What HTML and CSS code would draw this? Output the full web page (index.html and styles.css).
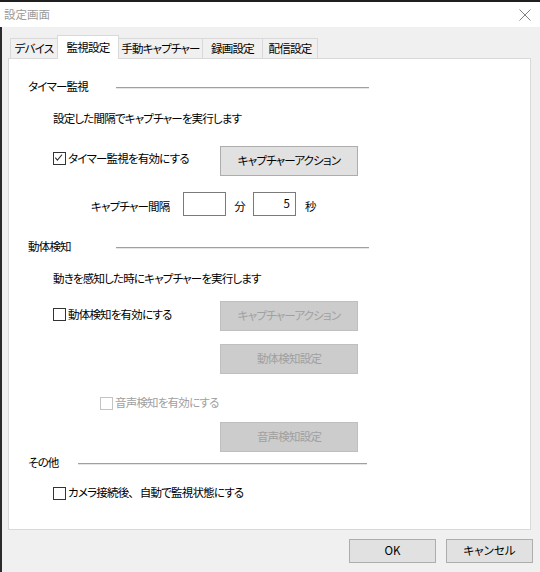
FILE: index.html
```html
<!DOCTYPE html>
<html lang="ja">
<head>
<meta charset="utf-8">
<title>設定画面</title>
<link rel="stylesheet" href="styles.css">
</head>
<body>
<div class="win">
  <div class="titlebar">
    <span class="title">設定画面</span>
    <svg class="close" viewBox="0 0 12 12" width="12" height="12"><path d="M0.5 0.5 L11.5 11.5 M11.5 0.5 L0.5 11.5" stroke="#808080" stroke-width="1" fill="none"/></svg>
  </div>
  <div class="main">
    <div class="tabs">
      <div class="tab t1">デバイス</div>
      <div class="tab active t2">監視設定</div>
      <div class="tab t3">手動キャプチャー</div>
      <div class="tab t4">録画設定</div>
      <div class="tab t5">配信設定</div>
    </div>
    <div class="panel">
      <div class="hdr m18"><span class="hdr-label w88">タイマー監視</span><i class="rule rw253"></i></div>
      <div class="desc m11">設定した間隔でキャプチャーを実行します</div>
      <div class="row row30 m18">
        <label class="check-col"><span class="cb"><svg viewBox="0 0 13 13" width="11" height="11"><polyline points="1.5,5.5 4,8.5 9.5,2" fill="none" stroke="#333" stroke-width="1.2"/></svg></span><span class="cb-text">タイマー監視を有効にする</span></label>
        <span class="btn">キャプチャーアクション</span>
      </div>
      <div class="row interval m16">
        <span class="iv-label">キャプチャー間隔</span>
        <span class="field"></span>
        <span class="unit">分</span>
        <span class="field">5</span>
        <span class="unit2">秒</span>
      </div>
      <div class="hdr m21"><span class="hdr-label w88">動体検知</span><i class="rule rw253"></i></div>
      <div class="desc m11">動きを感知した時にキャプチャーを実行します</div>
      <div class="row row30 m13">
        <label class="check-col off7"><span class="cb"></span><span class="cb-text">動体検知を有効にする</span></label>
        <span class="btn disabled">キャプチャーアクション</span>
      </div>
      <div class="row row30 m13 btn-only">
        <span class="btn disabled">動体検知設定</span>
      </div>
      <div class="row row20 m19 sound">
        <span class="cb cb-disabled"></span><span class="cb-text dis-text">音声検知を有効にする</span>
      </div>
      <div class="row row30 m9 btn-only">
        <span class="btn disabled">音声検知設定</span>
      </div>
      <div class="hdr m1"><span class="hdr-label w50">その他</span><i class="rule rw289"></i></div>
      <div class="row row20 m10 indent">
        <span class="cb"></span><span class="cb-text">カメラ接続後<span class="fullw">、</span>自動で監視状態にする</span>
      </div>
    </div>
    <div class="footer">
      <span class="btn fbtn">OK</span>
      <span class="btn fbtn">キャンセル</span>
    </div>
  </div>
</div>
</body>
</html>
```
FILE: styles.css
```css
* { box-sizing: border-box; }
html, body {
  margin: 0;
  padding: 0;
}
body {
  width: 540px;
  height: 572px;
  overflow: hidden;
  background: #f0f0f0;
  font-family: "Noto Sans CJK JP", "Noto Sans", sans-serif;
  font-size: 11.5px;
  letter-spacing: -0.8px;
  font-feature-settings: "palt";
  color: #000;
}
.win {
  height: 572px;
  border-top: 2px solid #1f1f1f;
  display: flex;
  flex-direction: column;
}
.titlebar {
  height: 25px;
  background: #fff;
  display: flex;
  align-items: center;
  justify-content: space-between;
  padding: 0 9px 0 4px;
}
.title {
  color: #9a9a9a;
  font-size: 11.5px;
  letter-spacing: 0;
  line-height: 1;
}
.close { display: block; }
.main {
  flex: 1;
  border-left: 2px solid #2b2b2b;
  padding-left: 6px;
  display: flex;
  flex-direction: column;
}
.tabs {
  display: flex;
  align-items: flex-end;
  height: 32px;
  padding-left: 2px;
  margin-bottom: -1px;
  position: relative;
  z-index: 1;
}
.tab {
  height: 20px;
  margin-bottom: 1px;
  border: 1px solid #d9d9d9;
  border-bottom: none;
  background: #f0f0f0;
  display: flex;
  align-items: center;
  justify-content: center;
  line-height: 1;
  padding-top: 1px;
  white-space: nowrap;
}
.tab + .tab { margin-left: -1px; }
.tab.active {
  height: 24px;
  margin-bottom: 0;
  background: #fff;
  position: relative;
  z-index: 2;
  padding-top: 0;
}
.t1 { width: 48px; }
.t2 { width: 62px; }
.t3 { width: 85px; }
.t4 { width: 61px; }
.t5 { width: 56px; }
.panel {
  width: 523px;
  height: 472px;
  border: 1px solid #d9d9d9;
  background: #fff;
  display: flex;
  flex-direction: column;
}
.hdr {
  height: 20px;
  display: flex;
  align-items: center;
  padding-left: 19px;
}
.hdr-label { line-height: 1; }
.w88 { width: 88px; }
.w50 { width: 50px; }
.rule {
  display: block;
  height: 2px;
  border-top: 1px solid #a0a0a0;
  border-bottom: 1px solid #e6e6e6;
  margin-top: 1px;
}
.rw253 { width: 253px; }
.rw289 { width: 289px; }
.desc {
  height: 20px;
  line-height: 20px;
  padding-left: 44px;
}
.row {
  display: flex;
  padding-left: 44px;
}
.row30 { height: 30px; align-items: flex-start; }
.row20 { height: 20px; align-items: center; }
.check-col {
  width: 167px;
  display: flex;
  align-items: center;
  height: 13px;
  margin-top: 6px;
}
.check-col.off7 { margin-top: 7px; }
.cb {
  width: 13px;
  height: 13px;
  flex: none;
  border: 1px solid #333;
  background: #fff;
  display: flex;
  align-items: center;
  justify-content: center;
}
.cb-disabled { border-color: #c4c4c4; }
.cb-text {
  margin-left: 2px;
  line-height: 1;
  white-space: nowrap;
}
.fullw {
  font-feature-settings: normal;
  letter-spacing: 0;
}
.dis-text { color: #a0a0a0; }
.btn {
  width: 138px;
  height: 30px;
  background: #e1e1e1;
  border: 1px solid #adadad;
  display: flex;
  align-items: center;
  justify-content: center;
  line-height: 1;
  white-space: nowrap;
}
.btn.disabled {
  background: #cccccc;
  border-color: #bfbfbf;
  color: #a0a0a0;
}
.btn-only { padding-left: 211px; }
.sound { padding-left: 91px; }
.indent { padding-left: 44px; }
.interval {
  height: 24px;
  align-items: center;
  padding-left: 82px;
}
.iv-label {
  width: 92px;
  padding-top: 5px;
  line-height: 1;
}
.field {
  width: 43px;
  height: 24px;
  border: 1px solid #7a7a7a;
  background: #fff;
  text-align: right;
  padding: 3px 5px 0 0;
  line-height: 14px;
  letter-spacing: 0;
}
.unit {
  width: 27px;
  text-align: center;
  padding-top: 5px;
  line-height: 1;
}
.unit2 {
  margin-left: 9px;
  padding-top: 5px;
  line-height: 1;
}
.m1 { margin-top: 1px; }
.m9 { margin-top: 9px; }
.m10 { margin-top: 10px; }
.m11 { margin-top: 11px; }
.m13 { margin-top: 13px; }
.m16 { margin-top: 16px; }
.m18 { margin-top: 18px; }
.m19 { margin-top: 19px; }
.m21 { margin-top: 21px; }
.footer {
  display: flex;
  justify-content: flex-end;
  gap: 10px;
  padding-right: 7px;
  margin-top: 9px;
}
.fbtn {
  width: 87px;
  height: 24px;
  letter-spacing: 0;
}
```
